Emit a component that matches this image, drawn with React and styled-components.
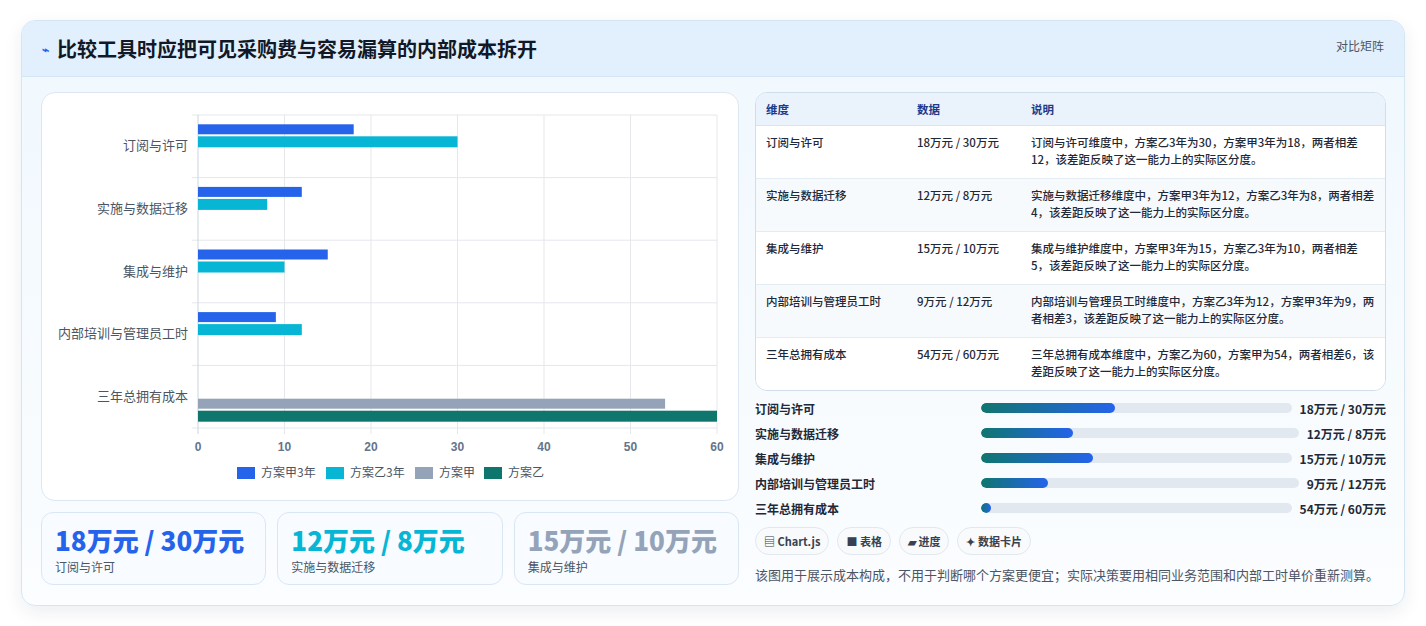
import styled, { createGlobalStyle } from 'styled-components';

const Global = createGlobalStyle`
  body { margin: 0; background: #fff; font-family: "Noto Sans CJK SC", "Noto Sans", sans-serif; }
`;

const rows = [
  { name: '订阅与许可', a: 18, b: 30, data: '18万元 / 30万元', desc: '订阅与许可维度中，方案乙3年为30，方案甲3年为18，两者相差12，该差距反映了这一能力上的实际区分度。', fill: 43 },
  { name: '实施与数据迁移', a: 12, b: 8, data: '12万元 / 8万元', desc: '实施与数据迁移维度中，方案甲3年为12，方案乙3年为8，两者相差4，该差距反映了这一能力上的实际区分度。', fill: 29 },
  { name: '集成与维护', a: 15, b: 10, data: '15万元 / 10万元', desc: '集成与维护维度中，方案甲3年为15，方案乙3年为10，两者相差5，该差距反映了这一能力上的实际区分度。', fill: 36 },
  { name: '内部培训与管理员工时', a: 9, b: 12, data: '9万元 / 12万元', desc: '内部培训与管理员工时维度中，方案乙3年为12，方案甲3年为9，两者相差3，该差距反映了这一能力上的实际区分度。', fill: 21 },
  { name: '三年总拥有成本', a: 54, b: 60, data: '54万元 / 60万元', desc: '三年总拥有成本维度中，方案乙为60，方案甲为54，两者相差6，该差距反映了这一能力上的实际区分度。', fill: 2, total: true },
];

const Page = styled.div`
  padding: 20px 21px;
  height: 626px;
  box-sizing: border-box;
`;
const Panel = styled.div`
  border: 1px solid #d5e6f3;
  border-radius: 14px;
  overflow: hidden;
  background: linear-gradient(180deg, #f0f8fe, #fbfdff);
  box-shadow: 0 6px 18px rgba(15, 40, 80, 0.08);
  height: 586px;
  box-sizing: border-box;
`;
const Header = styled.div`
  height: 55px;
  background: #e2f0fd;
  border-bottom: 1px solid #d3e6f6;
  display: flex;
  align-items: center;
  justify-content: space-between;
  padding: 0 20px 0 20px;
`;
const Title = styled.h1`
  margin: 0;
  font-size: 20px;
  font-weight: 700;
  color: #111827;
  display: flex;
  align-items: center;
  gap: 8px;
`;
const Tag = styled.span`
  font-size: 12px;
  color: #4b5563;
  align-self: flex-start;
  margin-top: 16px;
`;
const Body = styled.div`
  display: flex;
  gap: 16px;
  padding: 15px 18px 0 19px;
`;
const LeftCol = styled.div`
  width: 698px;
  display: flex;
  flex-direction: column;
  gap: 11px;
`;
const RightCol = styled.div`
  width: 633px;
  display: flex;
  flex-direction: column;
`;
const ChartCard = styled.div`
  height: 409px;
  box-sizing: border-box;
  background: #fff;
  border: 1px solid #dbe7f2;
  border-radius: 14px;
`;
const Stats = styled.div`
  display: grid;
  grid-template-columns: repeat(3, 1fr);
  gap: 11px;
`;
const Stat = styled.div`
  height: 73px;
  box-sizing: border-box;
  border: 1px solid #d9e7f5;
  border-radius: 12px;
  background: #f8fbff;
  padding: 9px 13px;
`;
const StatVal = styled.div`
  font-size: 26px;
  font-weight: 800;
  color: ${p => p.$c};
  line-height: 36px;
`;
const StatLbl = styled.div`
  font-size: 12px;
  color: #4b5563;
`;
const Table = styled.table`
  width: 100%;
  border-collapse: separate;
  border-spacing: 0;
  border: 1px solid #cfdeea;
  border-radius: 12px;
  overflow: hidden;
  font-size: 11.5px;
  color: #1f2937;
  background: #fff;
`;
const Th = styled.th`
  text-align: left;
  font-weight: 700;
  color: #1e3a8a;
  background: #eaf3fc;
  padding: 8px 10px;
  height: 16px;
  border-bottom: 1px solid #d8e4ef;
`;
const Td = styled.td`
  padding: 8px 10px;
  vertical-align: top;
  line-height: 17px;
  height: 36px;
  border-bottom: ${p => (p.$last ? 'none' : '1px solid #e3ebf3')};
  background: ${p => (p.$odd ? '#f7fafd' : '#fff')};
  font-weight: 500;
`;
const ProgList = styled.div`
  margin-top: 8px;
  display: flex;
  flex-direction: column;
  gap: 7px;
`;
const ProgRow = styled.div`
  display: flex;
  align-items: center;
  height: 18px;
  font-size: 12px;
  font-weight: 600;
  color: #1f2937;
`;
const ProgName = styled.span`
  width: 226px;
`;
const Track = styled.div`
  flex: 1;
  height: 10px;
  border-radius: 5px;
  background: #e2e8f0;
  overflow: hidden;
  margin-right: 8px;
`;
const Fill = styled.div`
  height: 100%;
  min-width: 10px;
  border-radius: 5px;
  background: linear-gradient(90deg, #0f766e, #2563eb);
`;
const ProgVal = styled.span`
  font-weight: 700;
`;
const Chips = styled.div`
  display: flex;
  gap: 8px;
  margin-top: 10px;
`;
const Chip = styled.span`
  font-size: 11px;
  font-weight: 600;
  color: #374151;
  border: 1px solid #e2e8f0;
  background: #f9fafb;
  border-radius: 14px;
  padding: 5px 8px;
`;
const Note = styled.p`
  margin: 10px 0 0;
  font-size: 13px;
  color: #4b5563;
`;

const X0 = 156, PW = 519, TOP = 22, RH = 62.6;
function Chart() {
  const sx = v => X0 + (v / 60) * PW;
  return (
    <svg width="698" height="409" style={{ display: 'block' }}>
      {[0, 1, 2, 3, 4, 5].map(i => (
        <line key={'h' + i} x1={X0 - 6} x2={X0 + PW} y1={TOP + i * RH} y2={TOP + i * RH} stroke="#e5e7eb" />
      ))}
      {[0, 10, 20, 30, 40, 50, 60].map(v => (
        <g key={v}>
          <line x1={sx(v)} x2={sx(v)} y1={TOP} y2={TOP + 5 * RH + 6} stroke={v === 0 ? '#cbd5e1' : '#e5e7eb'} />
          <text x={sx(v)} y={358} fontSize="12" fill="#64748b" textAnchor="middle" fontFamily="Liberation Sans, sans-serif" fontWeight="600">{v}</text>
        </g>
      ))}
      {rows.map((r, i) => {
        const y = TOP + i * RH + RH / 2;
        const o = r.total ? 24 : 0;
        return (
          <g key={r.name}>
            <text x={X0 - 10} y={y + 4} fontSize="13" fill="#4b5563" textAnchor="end">{r.name}</text>
            <rect x={X0} y={y - 22 + o} width={sx(r.a) - X0} height={10} fill={r.total ? '#94a3b8' : '#2563eb'} />
            <rect x={X0} y={y - 10 + o} width={sx(r.b) - X0} height={11} fill={r.total ? '#0f766e' : '#06b6d4'} />
          </g>
        );
      })}
      {[['方案甲3年', '#2563eb', 195], ['方案乙3年', '#06b6d4', 284], ['方案甲', '#94a3b8', 373], ['方案乙', '#0f766e', 442]].map(([t, c, x]) => (
        <g key={t}>
          <rect x={x} y={374} width={18} height={12} fill={c} />
          <text x={x + 24} y={384} fontSize="12" fill="#4b5563">{t}</text>
        </g>
      ))}
    </svg>
  );
}

export default function App() {
  return (
    <Page>
      <Global />
      <Panel>
        <Header>
          <Title><span style={{ color: '#2563eb', fontSize: 12 }}>⌁</span>比较工具时应把可见采购费与容易漏算的内部成本拆开</Title>
          <Tag>对比矩阵</Tag>
        </Header>
        <Body>
          <LeftCol>
            <ChartCard><Chart /></ChartCard>
            <Stats>
              <Stat><StatVal $c="#2563eb">18万元 / 30万元</StatVal><StatLbl>订阅与许可</StatLbl></Stat>
              <Stat><StatVal $c="#06b6d4">12万元 / 8万元</StatVal><StatLbl>实施与数据迁移</StatLbl></Stat>
              <Stat><StatVal $c="#94a3b8">15万元 / 10万元</StatVal><StatLbl>集成与维护</StatLbl></Stat>
            </Stats>
          </LeftCol>
          <RightCol>
            <Table>
              <thead>
                <tr><Th style={{ width: 131 }}>维度</Th><Th style={{ width: 94 }}>数据</Th><Th>说明</Th></tr>
              </thead>
              <tbody>
                {rows.map((r, i) => (
                  <tr key={r.name}>
                    <Td $odd={i % 2 === 1} $last={i === 4}>{r.name}</Td>
                    <Td $odd={i % 2 === 1} $last={i === 4}>{r.data}</Td>
                    <Td $odd={i % 2 === 1} $last={i === 4}>{r.desc}</Td>
                  </tr>
                ))}
              </tbody>
            </Table>
            <ProgList>
              {rows.map(r => (
                <ProgRow key={r.name}>
                  <ProgName>{r.name}</ProgName>
                  <Track><Fill style={{ width: r.fill + '%' }} /></Track>
                  <ProgVal>{r.data}</ProgVal>
                </ProgRow>
              ))}
            </ProgList>
            <Chips>
              <Chip>▤ Chart.js</Chip><Chip>■ 表格</Chip><Chip>▰ 进度</Chip><Chip>✦ 数据卡片</Chip>
            </Chips>
            <Note>该图用于展示成本构成，不用于判断哪个方案更便宜；实际决策要用相同业务范围和内部工时单价重新测算。</Note>
          </RightCol>
        </Body>
      </Panel>
    </Page>
  );
}
